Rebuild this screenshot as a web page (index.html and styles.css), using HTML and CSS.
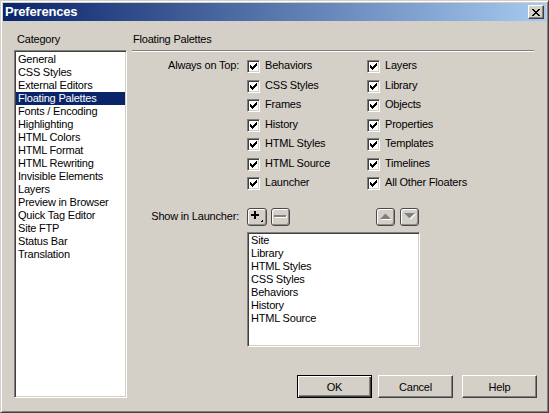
FILE: index.html
```html
<!DOCTYPE html>
<html>
<head>
<meta charset="utf-8">
<title>Preferences</title>
<link rel="stylesheet" href="styles.css">
</head>
<body>
<svg class="defs" width="0" height="0" aria-hidden="true">
  <defs>
    <path id="check" d="M8 2h1v1h-1z M7 3h2v1h-2z M2 4h1v1h-1z M6 4h3v1h-3z M2 5h2v1h-2z M5 5h3v1h-3z M2 6h5v1h-5z M3 7h3v1h-3z M4 8h1v1h-1z"/>
  </defs>
</svg>
<div class="window">
  <div class="titlebar">
    <span class="title">Preferences</span>
    <span class="close">
      <svg width="8" height="7" viewBox="0 0 8 7" shape-rendering="crispEdges"><path fill="#000" d="M0 0h2v1h-2z M6 0h2v1h-2z M1 1h2v1h-2z M5 1h2v1h-2z M2 2h4v1h-4z M3 3h2v1h-2z M2 4h4v1h-4z M1 5h2v1h-2z M5 5h2v1h-2z M0 6h2v1h-2z M6 6h2v1h-2z"/></svg>
    </span>
  </div>
  <div class="body">
    <div class="left">
      <div class="caption cat-caption">Category</div>
      <div class="listbox catlist">
        <div class="item">General</div>
        <div class="item">CSS Styles</div>
        <div class="item">External Editors</div>
        <div class="item selected">Floating Palettes</div>
        <div class="item">Fonts / Encoding</div>
        <div class="item">Highlighting</div>
        <div class="item">HTML Colors</div>
        <div class="item">HTML Format</div>
        <div class="item">HTML Rewriting</div>
        <div class="item">Invisible Elements</div>
        <div class="item">Layers</div>
        <div class="item">Preview in Browser</div>
        <div class="item">Quick Tag Editor</div>
        <div class="item">Site FTP</div>
        <div class="item">Status Bar</div>
        <div class="item">Translation</div>
      </div>
    </div>
    <div class="right">
      <div class="caption heading">Floating Palettes</div>
      <div class="sep"></div>
      <div class="aot">
        <div class="lbl"><span class="txt">Always on Top:</span></div>
        <div class="col c1">
          <div class="opt"><span class="cb"><svg width="11" height="11" shape-rendering="crispEdges"><use href="#check"/></svg></span><span class="txt">Behaviors</span></div>
          <div class="opt"><span class="cb"><svg width="11" height="11" shape-rendering="crispEdges"><use href="#check"/></svg></span><span class="txt">CSS Styles</span></div>
          <div class="opt"><span class="cb"><svg width="11" height="11" shape-rendering="crispEdges"><use href="#check"/></svg></span><span class="txt">Frames</span></div>
          <div class="opt"><span class="cb"><svg width="11" height="11" shape-rendering="crispEdges"><use href="#check"/></svg></span><span class="txt">History</span></div>
          <div class="opt"><span class="cb"><svg width="11" height="11" shape-rendering="crispEdges"><use href="#check"/></svg></span><span class="txt">HTML Styles</span></div>
          <div class="opt"><span class="cb"><svg width="11" height="11" shape-rendering="crispEdges"><use href="#check"/></svg></span><span class="txt">HTML Source</span></div>
          <div class="opt"><span class="cb"><svg width="11" height="11" shape-rendering="crispEdges"><use href="#check"/></svg></span><span class="txt">Launcher</span></div>
        </div>
        <div class="col c2">
          <div class="opt"><span class="cb"><svg width="11" height="11" shape-rendering="crispEdges"><use href="#check"/></svg></span><span class="txt">Layers</span></div>
          <div class="opt"><span class="cb"><svg width="11" height="11" shape-rendering="crispEdges"><use href="#check"/></svg></span><span class="txt">Library</span></div>
          <div class="opt"><span class="cb"><svg width="11" height="11" shape-rendering="crispEdges"><use href="#check"/></svg></span><span class="txt">Objects</span></div>
          <div class="opt"><span class="cb"><svg width="11" height="11" shape-rendering="crispEdges"><use href="#check"/></svg></span><span class="txt">Properties</span></div>
          <div class="opt"><span class="cb"><svg width="11" height="11" shape-rendering="crispEdges"><use href="#check"/></svg></span><span class="txt">Templates</span></div>
          <div class="opt"><span class="cb"><svg width="11" height="11" shape-rendering="crispEdges"><use href="#check"/></svg></span><span class="txt">Timelines</span></div>
          <div class="opt"><span class="cb"><svg width="11" height="11" shape-rendering="crispEdges"><use href="#check"/></svg></span><span class="txt">All Other Floaters</span></div>
        </div>
      </div>
      <div class="launch">
        <div class="lbl"><span class="txt">Show in Launcher:</span></div>
        <div class="tools">
          <div class="grp">
            <span class="tb w20">
              <svg width="18" height="16" viewBox="0 0 18 16" shape-rendering="crispEdges"><path fill="#000" d="M3 5h8v2h-8z M6 2h2v8h-2z M12 13L15 13L15 10Z"/></svg>
            </span>
            <span class="tb w19">
              <svg width="17" height="16" viewBox="0 0 17 16" shape-rendering="crispEdges"><path fill="#fff" d="M3 7h12v2h-12z"/><path fill="#808080" d="M2 6h12v2h-12z"/></svg>
            </span>
          </div>
          <div class="grp wide">
            <span class="tb w19">
              <svg width="17" height="16" viewBox="0 0 17 16"><path fill="#fff" d="M4 11L9.5 5.5L15 11Z"/><path fill="#808080" d="M3 10L8.5 4.5L14 10Z"/></svg>
            </span>
            <span class="tb w19">
              <svg width="17" height="16" viewBox="0 0 17 16"><path fill="#fff" d="M4 5L15 5L9.5 10.5Z"/><path fill="#808080" d="M3 4L14 4L8.5 9.5Z"/></svg>
            </span>
          </div>
        </div>
      </div>
      <div class="listbox launchlist">
        <div class="item">Site</div>
        <div class="item">Library</div>
        <div class="item">HTML Styles</div>
        <div class="item">CSS Styles</div>
        <div class="item">Behaviors</div>
        <div class="item">History</div>
        <div class="item">HTML Source</div>
      </div>
      <div class="buttons">
        <button class="btn default">OK</button>
        <button class="btn cancel">Cancel</button>
        <button class="btn help">Help</button>
      </div>
    </div>
  </div>
</div>
</body>
</html>
```

FILE: styles.css
```css
html, body {
  margin: 0;
  padding: 0;
  background: #d4d0c8;
}

body {
  font-family: "Liberation Sans", Arial, sans-serif;
  font-size: 11px;
  letter-spacing: -0.2px;
  color: #000;
}

.defs {
  position: absolute;
  width: 0;
  height: 0;
  overflow: hidden;
}

.window {
  width: 549px;
  height: 413px;
  box-sizing: border-box;
  border: 1px solid;
  border-color: #d4d0c8 #404040 #404040 #d4d0c8;
  box-shadow: inset 1px 1px #fff, inset -1px -1px #808080;
  padding: 2px;
  display: flex;
  flex-direction: column;
  background: #d4d0c8;
}

.titlebar {
  height: 18px;
  flex: none;
  display: flex;
  align-items: center;
  justify-content: space-between;
  padding: 0 2px;
  background: linear-gradient(to right, #0a246a, #a6caf0);
}

.title {
  color: #fff;
  font-weight: bold;
  font-size: 13px;
  line-height: 18px;
  letter-spacing: -0.2px;
}

.close {
  width: 16px;
  height: 14px;
  box-sizing: border-box;
  border: 1px solid;
  border-color: #fff #404040 #404040 #fff;
  box-shadow: inset -1px -1px #808080;
  background: #d4d0c8;
  display: flex;
  align-items: center;
  justify-content: center;
  padding-right: 1px;
}

.close svg { display: block; }

.body {
  flex: 1;
  display: flex;
  gap: 5px;
  padding: 12px 9px 12px 11px;
  min-height: 0;
}

.left {
  width: 113px;
  flex: none;
  display: flex;
  flex-direction: column;
}

.caption {
  height: 13px;
  line-height: 13px;
  white-space: nowrap;
}

.cat-caption {
  padding-left: 3px;
  margin-bottom: 4px;
}

.listbox {
  box-sizing: border-box;
  background: #fff;
  border: 1px solid;
  border-color: #808080 #fff #fff #808080;
  box-shadow: inset 1px 1px #404040, inset -1px -1px #d4d0c8;
  padding: 1px;
}

.catlist {
  height: 348px;
  padding-top: 2px;
}

.item {
  height: 13px;
  line-height: 13px;
  padding-left: 2px;
  white-space: nowrap;
}

.item.selected {
  background: #0a246a;
  color: #fff;
}

.right {
  flex: 1;
  display: flex;
  flex-direction: column;
  min-width: 0;
}

.heading {
  padding-left: 1px;
}

.sep {
  margin-top: 4px;
  margin-right: 3px;
  border-top: 1px solid #808080;
  border-bottom: 1px solid #fff;
}

.aot {
  margin-top: 5px;
  display: flex;
}

.lbl {
  width: 115px;
  flex: none;
  box-sizing: border-box;
  padding-right: 8px;
  display: flex;
  justify-content: flex-end;
  align-items: center;
  height: 19.5px;
  white-space: nowrap;
}

.txt {
  line-height: 13px;
  padding-bottom: 2px;
  white-space: nowrap;
}

.col {
  display: flex;
  flex-direction: column;
}

.c1 { width: 120px; }
.c2 { flex: 1; }

.opt {
  height: 19.5px;
  display: flex;
  align-items: center;
}

.opt .txt {
  margin-left: 5px;
}

.cb {
  width: 13px;
  height: 13px;
  box-sizing: border-box;
  flex: none;
  border: 1px solid;
  border-color: #808080 #fff #fff #808080;
  box-shadow: inset 1px 1px #404040, inset -1px -1px #d4d0c8;
  background: #fff;
}

.cb svg {
  display: block;
  fill: #000;
}

.launch {
  margin-top: 14.5px;
  display: flex;
  height: 18px;
}

.launch .lbl {
  height: 18px;
}

.tools {
  width: 172px;
  display: flex;
  justify-content: space-between;
}

.grp {
  display: flex;
  gap: 4px;
}

.grp.wide {
  gap: 5px;
}

.tb {
  height: 18px;
  box-sizing: border-box;
  border: 1px solid #4a4a4a;
  border-radius: 3px;
  background: #d4d0c8;
  box-shadow: inset 1px 1px #fff, inset -1px -1px #8c8c8c;
  display: block;
}

.tb svg { display: block; }

.w20 { width: 20px; }
.w19 { width: 19px; }

.launchlist {
  margin-left: 115px;
  margin-top: 6px;
  width: 173px;
  height: 115px;
}

.buttons {
  margin-top: auto;
  display: flex;
  justify-content: flex-end;
}

.btn {
  width: 75px;
  height: 23px;
  box-sizing: border-box;
  padding: 0;
  font: inherit;
  letter-spacing: inherit;
  color: #000;
  background: #d4d0c8;
  border: 1px solid;
  border-color: #fff #404040 #404040 #fff;
  box-shadow: inset -1px -1px #808080;
  border-radius: 0;
  outline: none;
}

.btn.default {
  border-color: #000;
  box-shadow: inset 1px 1px #fff, inset -1px -1px #404040, inset -2px -2px #808080;
}

.btn.cancel { margin-left: 6px; }
.btn.help { margin-left: 9px; }
```
